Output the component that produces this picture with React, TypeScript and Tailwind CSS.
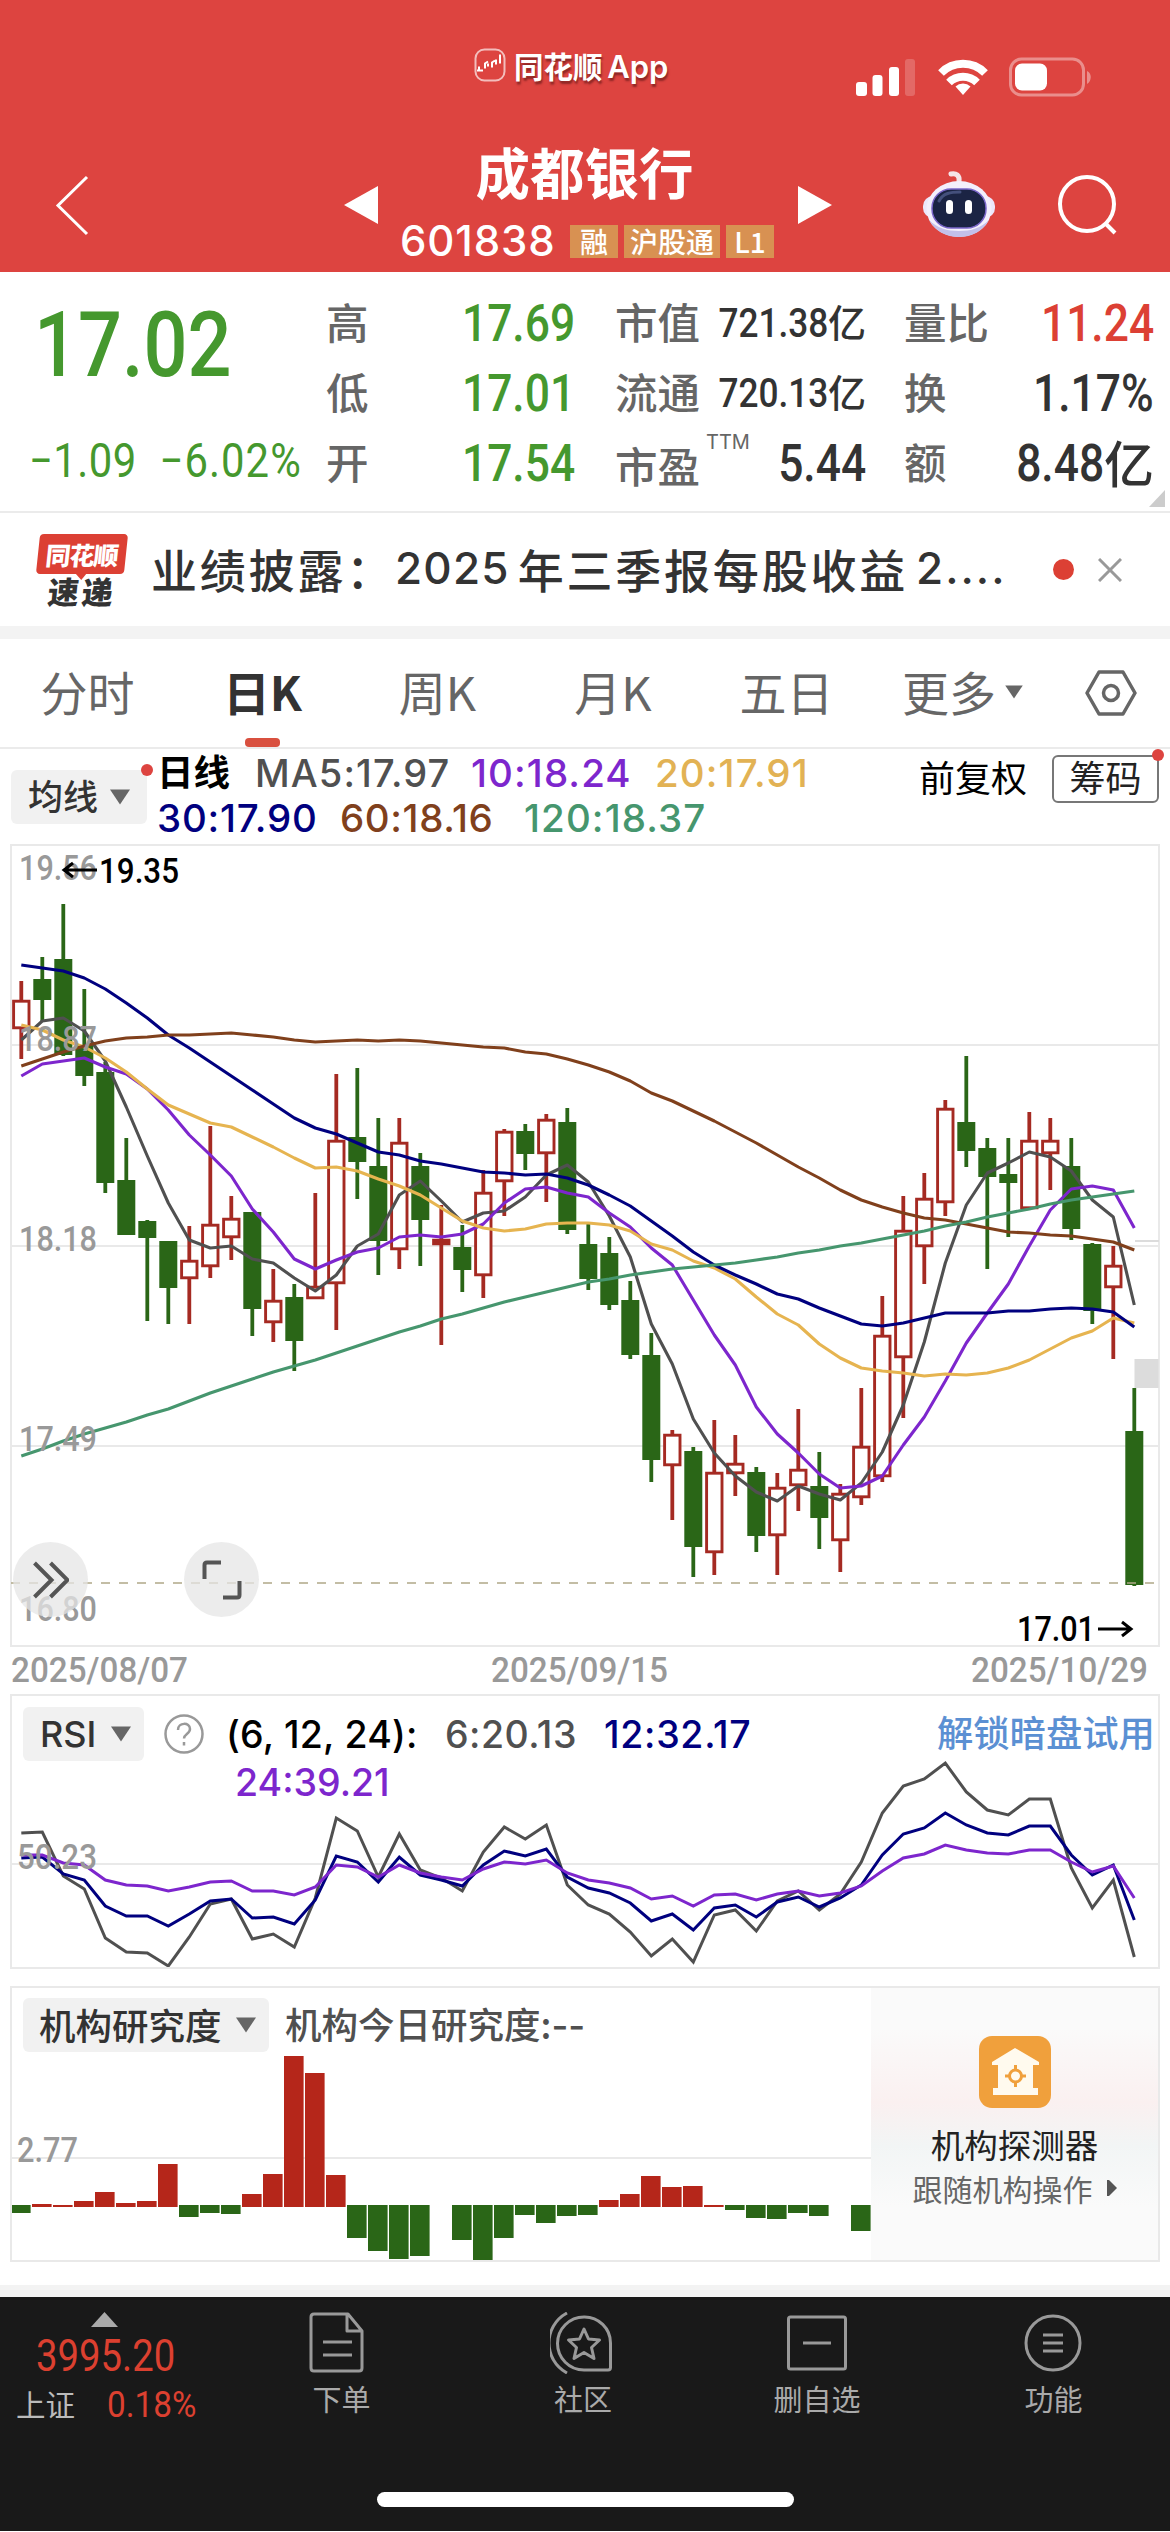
import React from "react";
import { clsx } from "clsx";

const STEP = 21;
const FIRST_X = 21.3;

type Candle = [high: number, top: number, bottom: number, low: number, up: 0 | 1];

// y values are chart pixels, measured from the top of the price panel
const candles: Candle[] = [
  [141, 160, 189, 219, 1], [117, 139, 160, 182, 0], [64, 119, 215, 216, 0],
  [149, 205, 236, 246, 0], [222, 232, 343, 353, 0], [298, 340, 395, 395, 0],
  [380, 381, 398, 481, 0], [401, 401, 448, 484, 0], [386, 420, 439, 484, 1],
  [286, 384, 427, 438, 1], [356, 378, 398, 420, 1], [372, 372, 469, 496, 0],
  [429, 460, 483, 502, 1], [444, 457, 501, 531, 0], [353, 446, 459, 459, 1],
  [234, 300, 444, 490, 1], [228, 297, 322, 359, 0], [278, 326, 401, 435, 0],
  [278, 302, 410, 429, 1], [313, 326, 380, 426, 0], [365, 399, 405, 505, 1],
  [385, 407, 430, 452, 0], [330, 352, 436, 458, 1], [289, 291, 342, 376, 1],
  [284, 291, 314, 330, 0], [274, 279, 314, 362, 1], [268, 282, 390, 394, 0],
  [384, 404, 439, 450, 0], [397, 413, 465, 470, 0], [441, 460, 515, 519, 0],
  [493, 515, 620, 642, 0], [590, 594, 626, 680, 1], [607, 611, 707, 737, 0],
  [580, 632, 713, 735, 1], [595, 623, 634, 656, 1], [627, 632, 696, 712, 0],
  [633, 647, 696, 735, 1], [569, 629, 646, 671, 1], [612, 646, 678, 709, 0],
  [644, 653, 701, 732, 1], [548, 606, 658, 665, 1], [456, 495, 637, 642, 1],
  [356, 390, 518, 578, 1], [333, 358, 407, 444, 1], [260, 268, 363, 376, 1],
  [216, 282, 311, 327, 0], [298, 308, 337, 429, 0], [298, 334, 343, 397, 0],
  [272, 300, 369, 369, 1], [278, 300, 314, 350, 1], [298, 326, 389, 400, 0],
  [403, 404, 471, 484, 0], [406, 425, 448, 519, 1], [548, 591, 745, 746, 0],
];

const averages = [
  {
    color: "#505050",
    points: [200, 181, 178, 191, 221, 267, 316, 363, 400, 408, 406, 419, 423, 438, 451, 435, 406, 394, 355, 341, 361, 382, 373, 371, 357, 335, 325, 342, 376, 417, 484, 524, 579, 613, 636, 652, 661, 646, 654, 660, 643, 612, 565, 502, 423, 365, 333, 323, 312, 317, 331, 360, 377, 465],
  },
  {
    color: "#7d26cd",
    points: [236, 224, 221, 218, 227, 234, 249, 270, 295, 315, 336, 369, 392, 419, 429, 420, 412, 408, 397, 395, 397, 394, 384, 363, 349, 347, 353, 357, 373, 387, 408, 425, 460, 495, 525, 567, 594, 613, 634, 648, 646, 636, 605, 577, 541, 503, 473, 444, 406, 370, 349, 346, 350, 388],
  },
  {
    color: "#e6b450",
    points: [185, 190, 200, 207, 218, 232, 249, 265, 274, 283, 287, 297, 307, 318, 328, 327, 331, 339, 346, 355, 368, 381, 388, 391, 389, 384, 383, 383, 385, 391, 404, 410, 421, 428, 439, 457, 474, 485, 504, 518, 528, 531, 533, 536, 534, 535, 533, 528, 520, 509, 498, 491, 478, 483],
  },
  {
    color: "#00007f",
    points: [125, 128, 131, 138, 149, 163, 178, 195, 208, 222, 236, 250, 264, 278, 288, 294, 303, 312, 315, 321, 324, 328, 332, 333, 335, 334, 338, 345, 355, 366, 381, 396, 412, 425, 435, 444, 454, 459, 468, 476, 484, 486, 483, 478, 473, 473, 473, 471, 471, 469, 468, 469, 472, 487],
  },
  {
    color: "#80401c",
    points: [226, 219, 212, 206, 201, 198, 197, 195, 195, 194, 193, 195, 197, 200, 202, 201, 200, 201, 200, 201, 203, 205, 207, 208, 212, 214, 219, 225, 232, 241, 253, 261, 271, 281, 292, 303, 315, 327, 338, 350, 360, 367, 373, 378, 380, 384, 388, 392, 393, 395, 396, 399, 402, 410],
  },
  {
    color: "#46966e",
    points: [616, 609, 601, 594, 588, 582, 575, 569, 561, 553, 546, 539, 532, 526, 520, 513, 506, 499, 492, 486, 479, 474, 468, 462, 457, 452, 447, 442, 439, 435, 432, 429, 427, 425, 423, 420, 417, 413, 410, 406, 403, 399, 395, 391, 386, 382, 377, 373, 369, 364, 360, 357, 354, 351],
  },
];

const rsi = [
  {
    color: "#505050",
    points: [153, 152, 196, 209, 258, 272, 273, 286, 257, 224, 219, 259, 254, 267, 218, 138, 151, 197, 154, 190, 198, 211, 172, 147, 159, 145, 205, 225, 234, 252, 276, 259, 282, 235, 230, 251, 221, 211, 230, 214, 182, 133, 106, 99, 83, 112, 130, 135, 119, 119, 188, 228, 200, 277],
  },
  {
    color: "#00007f",
    points: [178, 177, 194, 200, 226, 236, 236, 246, 234, 221, 219, 238, 237, 244, 220, 176, 182, 202, 177, 195, 200, 206, 185, 171, 176, 169, 197, 208, 213, 223, 241, 234, 250, 228, 225, 237, 222, 217, 227, 218, 205, 175, 154, 148, 133, 145, 153, 155, 146, 146, 175, 195, 185, 240],
  },
  {
    color: "#7d26cd",
    points: [175, 175, 183, 185, 200, 205, 206, 211, 207, 202, 201, 211, 211, 215, 207, 185, 187, 197, 185, 193, 197, 200, 189, 182, 184, 180, 193, 200, 203, 208, 219, 216, 226, 215, 214, 220, 214, 211, 216, 213, 206, 191, 178, 174, 165, 170, 173, 174, 170, 170, 182, 192, 186, 218],
  },
];

// positive grows upwards (red), negative downwards (green)
const research = [
  -8, 3, 2, 6, 15, 4, 6, 43, -12, -8, -9, 13, 33, 151, 134, 32, -33, -46, -54,
  -51, 0, -35, -55, -33, -10, -18, -11, -10, 7, 13, 31, 20, 21, 2, -5, -13, -14,
  -8, -11, 0, -26,
];

const toPoints = (ys: number[]) =>
  ys.map((y, i) => `${(FIRST_X + i * STEP).toFixed(1)},${y}`).join(" ");

interface ChartLabelProps {
  x: number;
  y: number;
  width: number;
  size?: number;
  color?: string;
  children: string;
}

const ChartLabel = ({ x, y, width, size = 35, color = "#999999", children }: ChartLabelProps) => (
  <text
    x={x}
    y={y}
    fontSize={size}
    fill={color}
    textLength={width}
    lengthAdjust="spacingAndGlyphs"
    className="font-['Roboto',sans-serif] font-medium"
  >
    {children}
  </text>
);

const Caret = ({ className }: { className?: string }) => (
  <svg viewBox="0 0 22 16" className={clsx("h-4 w-[22px]", className)}>
    <path d="M1 0.5h20L11 15.5z" fill="#666" />
  </svg>
);

const StatusBar = () => (
  <div className="flex h-[120px] items-start pl-[474px] pt-[48px] text-white">
    <svg viewBox="0 0 32 34" className="h-[34px] w-8" fill="none" stroke="#fff">
      <rect x="1.5" y="1.5" width="29" height="31" rx="9" strokeOpacity="0.65" strokeWidth="2" />
      <path d="M3 22.500h6m-4-4v3m6-1v-5l3-2m0 5v-3m4 4v-5l3-2m1 4v-5m4-5v9" strokeWidth="2" />
    </svg>
    <span className="ml-2 w-[160px] whitespace-nowrap text-[29.500px] font-semibold leading-[34px] [text-shadow:1px_3px_2px_rgba(90,20,20,0.6)]">
      同花顺 <span className="-ml-0.5 font-['Inter'] text-[31px]">App</span>
    </span>
    <svg viewBox="0 0 60 38" className="ml-[182px] mt-[11px] h-[38px] w-[60px]" fill="#fff">
      <rect x="0" y="23" width="11" height="14" rx="3" />
      <rect x="16.500" y="16" width="10" height="21" rx="3" />
      <rect x="33" y="8" width="10" height="29" rx="3" />
      <rect x="49" y="0" width="10" height="37" rx="3" opacity="0.2" />
    </svg>
    <svg viewBox="0 0 50 38" className="ml-[22px] mt-[10px] h-[38px] w-[50px]" fill="none" stroke="#fff" strokeWidth="8">
      <path d="M3 15a31 31 0 0 1 44 0" />
      <path d="M11 24.500a20 20 0 0 1 28 0" />
      <path d="M25 37l-7.500-8.500a11 11 0 0 1 15 0z" fill="#fff" stroke="none" />
    </svg>
    <svg viewBox="0 0 84 42" className="ml-[21px] mt-[9px] h-[42px] w-[84px]" fill="none">
      <rect x="1.500" y="2" width="73" height="36" rx="11" stroke="#fff" strokeOpacity="0.4" strokeWidth="3" />
      <rect x="6" y="6.500" width="32" height="27" rx="7" fill="#fff" />
      <path d="M78 14c5 2 5 10 0 13z" fill="#fff" fillOpacity="0.4" />
    </svg>
  </div>
);

const Robot = () => (
  <svg viewBox="0 0 74 72" className="h-[72px] w-[74px]">
    <path d="M37 14c1-7-3-9-8-8" fill="none" stroke="#f4e4e8" strokeWidth="5" strokeLinecap="round" />
    <rect x="1" y="28" width="72" height="22" rx="10" fill="#ece7fb" />
    <ellipse cx="37" cy="41" rx="32.500" ry="28" fill="#f3effc" />
    <path d="M7 52c6 11 17 17 30 17s24-6 30-17c-8 8-18 11-30 11S15 60 7 52z" fill="#c3c0ea" />
    <rect x="10" y="21" width="54" height="39" rx="19" fill="#1b2444" stroke="#7a66c9" strokeWidth="1.500" />
    <path d="M17 33c4-8 12-9 21-9" fill="none" stroke="#44507c" strokeWidth="3" strokeLinecap="round" />
    <rect x="24" y="32" width="7" height="14" rx="3.500" fill="#fff" />
    <rect x="43" y="32" width="7" height="14" rx="3.500" fill="#fff" />
  </svg>
);

const Tag = ({ children }: { children: string }) => (
  <span className="flex h-[33px] min-w-[48px] items-center justify-center bg-[#d89152] px-1.5 pb-0.5 text-[28px] font-medium leading-none">
    {children}
  </span>
);

const Header = () => (
  <header className="h-[272px] bg-[#dd4440] text-white">
    <StatusBar />
    <div className="flex h-[152px]">
      <svg viewBox="0 0 34 62" className="ml-[55px] mt-[55px] h-[62px] w-[34px]" fill="none">
        <path d="M32 2 3 30.500 32 59" stroke="#fff" strokeWidth="3" />
      </svg>
      <svg viewBox="0 0 34 38" className="ml-[255px] mt-[66px] h-[38px] w-[34px]">
        <path d="M0 19 34 0v38z" fill="#fff" />
      </svg>
      <div className="ml-[22px] flex w-[376px] flex-col">
        <h1 className="mt-[21px] h-[60px] text-center text-[54.500px] font-semibold leading-[60px]">
          <span className="mr-[7px]">成都银行</span>
        </h1>
        <div className="mt-6 flex h-[33px] items-center gap-1.5 whitespace-nowrap">
          <span className="mr-2.5 w-[154px] pb-0.5 font-['Inter'] text-[42px] font-medium leading-none tracking-[0.900px]">
            601838
          </span>
          <Tag>融</Tag>
          <Tag>沪股通</Tag>
          <Tag>L1</Tag>
        </div>
      </div>
      <svg viewBox="0 0 34 38" className="ml-[22px] mt-[66px] h-[38px] w-[34px]">
        <path d="M34 19 0 0v38z" fill="#fff" />
      </svg>
      <div className="ml-[90px] mt-[48px]">
        <Robot />
      </div>
      <svg viewBox="0 0 62 62" className="ml-[61px] mt-[54px] h-[62px] w-[62px]" fill="none" stroke="#fff" strokeWidth="4">
        <circle cx="30" cy="30" r="27" />
        <path d="m48 49 10 10" />
      </svg>
    </div>
  </header>
);

interface StatProps {
  label: string;
  sup?: string;
  value: string;
  unit?: string;
  tone?: "down" | "up" | "plain";
  small?: boolean;
}

const Stat = ({ label, sup, value, unit, tone = "plain", small }: StatProps) => (
  <div className="flex h-[70px] items-center justify-between whitespace-nowrap">
    <span
      className={clsx(
        "flex text-[42.500px] font-medium leading-none text-[#666]",
        sup ? "pt-1" : "pb-[3px]",
      )}
    >
      {label}
      {sup && (
        <sup className="relative -top-3 ml-1.5 font-['Inter'] text-[20px] font-normal leading-none">
          {sup}
        </sup>
      )}
    </span>
    <span
      className={clsx(
        "flex w-0 items-center justify-end leading-none",
        tone === "down" && "text-[#45982e]",
        tone === "up" && "text-[#dc4034]",
        tone === "plain" && "text-[#333]",
      )}
    >
      <span
        className={clsx(
          "origin-right scale-x-[0.87] font-['Roboto'] font-medium",
          small ? "text-[40.500px]" : "text-[51px]",
        )}
      >
        {value}
      </span>
      {unit && (
        <span className={clsx("pb-1 font-medium", small ? "text-[38px]" : "text-[50px]")}>{unit}</span>
      )}
    </span>
  </div>
);

const Quote = () => (
  <section className="relative flex h-[241px] border-b-2 border-[#ebebeb] pt-4">
    <div className="w-[326px] pl-[34px] font-['Roboto'] text-[#45982e]">
      <div className="mt-[13px] flex h-[90px] origin-left scale-x-[0.86] items-center text-[90px] font-medium leading-none">
        17.02
      </div>
      <div className="-ml-[5px] mt-[49px] flex h-[44px] w-[340px] origin-left scale-x-[0.88] items-center gap-[26px] whitespace-nowrap text-[47.500px] leading-none">
        <span className="tracking-[0.500px]">−1.09</span>
        <span className="tracking-[1.200px]">−6.02%</span>
      </div>
    </div>
    <div className="w-[249px]">
      <Stat label="高" value="17.69" tone="down" />
      <Stat label="低" value="17.01" tone="down" />
      <Stat label="开" value="17.54" tone="down" />
    </div>
    <div className="ml-[40px] w-[251px]">
      <Stat label="市值" value="721.38" unit="亿" small />
      <Stat label="流通" value="720.13" unit="亿" small />
      <Stat label="市盈" sup="TTM" value="5.44" />
    </div>
    <div className="ml-[38px] w-[250px]">
      <Stat label="量比" value="11.24" tone="up" />
      <Stat label="换" value="1.17%" />
      <Stat label="额" value="8.48" unit="亿" />
    </div>
    <svg viewBox="0 0 16 17" className="absolute bottom-1 right-[5px] h-[17px] w-4">
      <path d="M16 0v17H0z" fill="#ccc" />
    </svg>
  </section>
);

const News = () => (
  <section className="flex h-[114px] items-center border-b border-[#f3f3f3] pl-[36px]">
    <div className="flex w-[92px] flex-col items-center">
      <div className="relative flex h-10 w-[88px] -skew-x-6 items-center justify-center rounded-[4px] bg-[#dc4034] text-[25px] font-black leading-none tracking-[-1px] text-white">
        同花顺
        <svg viewBox="0 0 12 7" className="absolute -bottom-[6px] left-[39px] h-[7px] w-3">
          <path d="M0 0h12L7 7z" fill="#dc4034" />
        </svg>
      </div>
      <div className="mt-0.5 h-[30px] -skew-x-6 text-[31px] font-black leading-[30px] tracking-[3px] text-[#333]">
        速递
      </div>
    </div>
    <p className="ml-[23px] flex w-[861px] items-center whitespace-nowrap pb-1 text-[46px] font-medium leading-none tracking-[2.800px] text-[#333]">
      <span>业绩披露：</span>
      <span className="font-['Inter'] text-[44px] tracking-[1.200px]">2025</span>
      <span className="ml-2">年三季报每股收益</span>
      <span className="ml-2 font-['Inter'] text-[44px] tracking-[2px]">2....</span>
    </p>
    <div className="ml-[41px] h-[21px] w-[21px] rounded-full bg-[#dc4034]" />
    <svg viewBox="0 0 24 24" className="ml-[24px] h-6 w-6" stroke="#999" strokeWidth="3">
      <path d="m1 1 22 22M23 1 1 23" />
    </svg>
  </section>
);

const tabs = [
  { name: "分时", width: "w-[175px]" },
  { name: "日K", width: "w-[175px]" },
  { name: "周K", width: "w-[175px]" },
  { name: "月K", width: "w-[176px]" },
  { name: "五日", width: "w-[171px]" },
];

const Tabs = () => (
  <nav className="flex h-[110px] border-b-2 border-[#ebebeb] text-[47px] leading-none text-[#666]">
    {tabs.map((tab) => {
      const active = tab.name === "日K";
      return (
        <div
          key={tab.name}
          className={clsx(
            "flex flex-col items-center",
            tab.width,
            active && "font-semibold text-[#333]",
          )}
        >
          <span className="flex h-[99px] items-center pt-1">{tab.name}</span>
          {active && <span className="h-[9px] w-[35px] rounded-[4px] bg-[#d9503f]" />}
        </div>
      );
    })}
    <div className="ml-[30px] flex h-[99px] items-center pt-1">更多</div>
    <Caret className="ml-[7px] mt-[46px] h-[14px] w-[20px]" />
    <svg viewBox="0 0 52 46" className="ml-[60px] mt-[31px] h-[46px] w-[52px]" fill="none" stroke="#666" strokeWidth="3.500">
      <path d="M14 2h24l12 21-12 21H14L2 23z" strokeLinejoin="round" />
      <circle cx="26" cy="23" r="7.500" />
    </svg>
  </nav>
);

const Pill = ({ className, children }: { className?: string; children: React.ReactNode }) => (
  <div
    className={clsx(
      "flex h-[54px] items-center rounded-md bg-[#f1f1f1] text-[35px] font-medium leading-none text-[#333]",
      className,
    )}
  >
    {children}
    <Caret className="ml-auto" />
  </div>
);

const Legend = () => (
  <section className="flex h-[91px] font-['Inter','Noto_Sans_CJK_SC',sans-serif]">
    <div className="relative ml-[11px] mt-[21px] h-[54px] w-[136px]">
      <Pill className="w-full pl-[17px] pr-4">均线</Pill>
      <span className="absolute -right-[6px] -top-[6px] h-3 w-3 rounded-full bg-[#dd4440]" />
    </div>
    <div className="ml-2.5 w-[702px] whitespace-nowrap text-[38.500px] font-medium leading-[45px] tracking-[1.100px]">
      <div className="mt-[2px] flex h-[45px]">
        <span className="w-[98px] text-[36.500px] font-semibold tracking-normal text-black">日线</span>
        <span className="w-[216px] text-[38px] text-[#505050]">MA5:17.97</span>
        <span className="w-[184px] text-[#7d26cd]">10:18.24</span>
        <span className="text-[#e2b254]">20:17.91</span>
      </div>
      <div className="flex h-[45px]">
        <span className="w-[183px] tracking-[0.800px] text-[#00007f]">30:17.90</span>
        <span className="w-[184px] tracking-[0.600px] text-[#80401c]">60:18.16</span>
        <span className="text-[#46966e]">120:18.37</span>
      </div>
    </div>
    <span className="ml-[60px] mt-[8px] h-11 w-[133px] text-[36px] leading-[44px] text-black">前复权</span>
    <div className="relative mt-[6px] flex h-[48px] w-[107px] items-center justify-center rounded-[6px] border-2 border-[#777] text-[36px] leading-none text-[#222]">
      筹码
      <span className="absolute -right-[7px] -top-[8px] h-3 w-3 rounded-full bg-[#dd4440]" />
    </div>
  </section>
);

const Candles = () => (
  <>
    {candles.map(([high, top, bottom, low, up], i) => {
      const x = FIRST_X + i * STEP;
      const color = up ? "#a52a22" : "#2a6617";
      return (
        <g key={i} stroke={color} strokeWidth="3.800">
          {up ? (
            <>
              <path d={`M${x} ${high}V${top}M${x} ${bottom}V${low}`} />
              <rect
                x={x - 7.7}
                y={top + 1.2}
                width="15.400"
                height={Math.max(bottom - top - 2.4, 1)}
                strokeWidth="2.900"
                fill={bottom - top < 8 ? color : "#fff"}
              />
            </>
          ) : (
            <>
              <path d={`M${x} ${high}V${low}`} />
              <rect x={x - 9} y={top} width="18" height={bottom - top} fill={color} stroke="none" />
            </>
          )}
        </g>
      );
    })}
  </>
);

const PriceChart = () => (
  <section className="relative h-[808px]">
    <svg viewBox="0 0 1170 808" className="block h-[808px] w-full overflow-visible" fill="none">
      <g stroke="#e9e9e9" strokeWidth="2">
        <rect x="11" y="5" width="1148" height="801" />
        <path d="M11 205h1148M11 406h1148M11 606h1148" />
      </g>
      <ChartLabel x={19} y={40} width={78}>19.56</ChartLabel>
      <path d="M1135 401h24" stroke="#dcdcdc" strokeWidth="2" />
      <rect x="1134.500" y="519" width="24" height="29" fill="#dcdcdc" />
      <Candles />
      {averages.map(({ color, points }) => (
        <polyline key={color} points={toPoints(points)} stroke={color} strokeWidth="3.100" strokeLinejoin="round" />
      ))}
      <path d="M10 743H1159" stroke="#b0a888" strokeWidth="1.600" strokeDasharray="9 9" strokeDashoffset="-1" />
      <ChartLabel x={19} y={211} width={78}>18.87</ChartLabel>
      <ChartLabel x={19} y={411} width={78}>18.18</ChartLabel>
      <ChartLabel x={19} y={611} width={78}>17.49</ChartLabel>
      <ChartLabel x={19} y={781} width={78}>16.80</ChartLabel>
      <path d="M97 30H64m9-7-9 7 9 7" stroke="#000" strokeWidth="3" />
      <ChartLabel x={99} y={43} width={80} color="#000">19.35</ChartLabel>
      <ChartLabel x={1017} y={801} width={78} color="#000">17.01</ChartLabel>
      <path d="M1098 789h33m-9-7 9 7-9 7" stroke="#000" strokeWidth="3" />
    </svg>
    {/* Floating chart controls */}
    <div className="absolute left-[13px] top-[702px] flex h-[75px] w-[75px] items-center justify-center rounded-full bg-[#e6e6e6]/75">
      <svg viewBox="0 0 36 38" className="h-[38px] w-9" fill="none" stroke="#555" strokeWidth="4">
        <path d="m1.500 2 17 17-17 17M17.500 2l17 17-17 17" />
      </svg>
    </div>
    <div className="absolute left-[184px] top-[702px] flex h-[75px] w-[75px] items-center justify-center rounded-full bg-[#e6e6e6]/75">
      <svg viewBox="0 0 40 40" className="h-10 w-10" fill="none" stroke="#555" strokeWidth="4">
        <path d="M2.500 19V5q0-2.500 2.500-2.500h14M37.500 21v14q0 2.500-2.500 2.500H21" />
      </svg>
    </div>
  </section>
);

const Dates = () => (
  <svg viewBox="0 0 1170 46" className="block h-[46px] w-full">
    <ChartLabel x={11} y={34} width={177}>2025/08/07</ChartLabel>
    <ChartLabel x={491} y={34} width={177}>2025/09/15</ChartLabel>
    <ChartLabel x={971} y={34} width={177}>2025/10/29</ChartLabel>
  </svg>
);

const RsiPanel = () => (
  <section className="relative mx-[10px] h-[275px] border-2 border-[#e9e9e9] font-['Inter','Noto_Sans_CJK_SC',sans-serif]">
    <svg viewBox="12 16 1146 271" className="absolute inset-0 h-full w-full" fill="none">
      <path d="M11 184h1148" stroke="#e9e9e9" strokeWidth="2" />
      {rsi.map(({ color, points }) => (
        <polyline key={color} points={toPoints(points)} stroke={color} strokeWidth="3" />
      ))}
      <ChartLabel x={17} y={189} width={80}>50.23</ChartLabel>
    </svg>
    <div className="relative flex items-center pl-[11px] pt-[11px] text-[37.500px] font-medium leading-[49px]">
      <Pill className="w-[121px] pl-[17px] pr-3">
        <span className="text-[36px]">RSI</span>
      </Pill>
      <svg viewBox="0 0 40 40" className="ml-5 h-10 w-10" fill="none" stroke="#999" strokeWidth="2.500">
        <circle cx="20" cy="20" r="18.500" />
        <path d="M14 16c0-8 12-8 12-1 0 5-6 5-6 9.500M20 28v3.500" />
      </svg>
      <span className="ml-[22px] w-[219px] tracking-[0.200px] text-black">(6, 12, 24):</span>
      <span className="w-[159px] tracking-[0.500px] text-[#505050]">6:20.13</span>
      <span className="w-[333px] tracking-[0.700px] text-[#00007f]">12:32.17</span>
      <span className="whitespace-nowrap text-[36.300px] text-[#5b90d3]">解锁暗盘试用</span>
    </div>
    <div className="relative -mt-[3px] pl-[223px] text-[37.500px] font-medium leading-[49px] text-[#7d26cd]">
      24:39.21
    </div>
  </section>
);

const ResearchPanel = () => (
  <section className="mx-[10px] mt-[17px] flex h-[276px] border-2 border-[#e9e9e9]">
    <div className="relative w-[859px]">
      <svg viewBox="12 17 859 272" className="absolute inset-0 h-full w-full">
        <path d="M11 187h860" stroke="#e9e9e9" strokeWidth="2" />
        {research.map((value, i) => (
          <rect
            key={i}
            x={11 + i * 21}
            y={value > 0 ? 236 - value : 234}
            width="19.600"
            height={Math.abs(value)}
            fill={value > 0 ? "#b5261a" : "#2a6617"}
          />
        ))}
        <ChartLabel x={17} y={191} width={61}>2.77</ChartLabel>
      </svg>
      <div className="relative flex items-center pl-[11px] pt-[10px] text-[36px] font-medium leading-none text-[#505050]">
        <Pill className="w-[246px] pl-4 pr-3">
          <span className="text-[36.500px]">机构研究度</span>
        </Pill>
        <span className="ml-4 whitespace-nowrap text-[36.500px]">
          机构今日研究度:<span className="font-['Inter']">--</span>
        </span>
      </div>
    </div>
    <div className="flex flex-1 flex-col items-center bg-[linear-gradient(180deg,#fafafa_15%,#faf0f0_42%,#f2f5f5_58%,#fafafa_80%)]">
      <svg viewBox="0 0 72 72" className="mt-[48px] h-[72px] w-[72px]">
        <rect width="72" height="72" rx="13" fill="#f0a03c" />
        <path d="M36 12 60 26v3h-6v23h5v7H14v-7h5V29h-6v-3z" fill="#fffaee" />
        <circle cx="36.500" cy="40" r="6" fill="none" stroke="#f0a03c" strokeWidth="3" />
        <path d="M36.500 29v5m0 12v5M26 40h5m11 0h5" stroke="#f0a03c" strokeWidth="3" />
      </svg>
      <span className="mt-[18px] text-[33.500px] leading-[36px] text-[#222]">机构探测器</span>
      <span className="mt-[9px] flex items-center whitespace-nowrap text-[30px] leading-[34px] text-[#666]">
        跟随机构操作
        <svg viewBox="0 0 10 16" className="ml-3.5 h-4 w-2.5">
          <path d="M0 0h2l8 8-8 8H0z" fill="#555" />
        </svg>
      </span>
    </div>
  </section>
);

const iconProps = {
  viewBox: "0 0 66 62",
  className: "h-[62px] w-[66px]",
  fill: "none",
  stroke: "#999",
  strokeWidth: 3,
};

const actions = [
  {
    name: "下单",
    width: "w-[223px]",
    icon: (
      <svg {...iconProps}>
        <path d="M5 2h34l14 17v37q0 3-3 3H5q-3 0-3-3V5q0-3 3-3zM38 2v17h15M14 30h29M14 43h29" strokeLinejoin="round" />
      </svg>
    ),
  },
  {
    name: "社区",
    width: "w-[260px]",
    icon: (
      <svg {...iconProps}>
        <path d="M17 1C-7 14-7 48 17 61" />
        <path d="M34 5a26 26 0 1 0 0 53h24q2.500 0 2.500-2.500V31A26 26 0 0 0 34 5z" />
        <path d="m34 17 4.500 10 11 1-8 7.500 2.500 11-10-6-10 6 2.500-11-8-7.500 11-1z" strokeLinejoin="round" />
      </svg>
    ),
  },
  {
    name: "删自选",
    width: "w-[208px]",
    icon: (
      <svg {...iconProps}>
        <rect x="4.500" y="5" width="57" height="52" rx="2" />
        <path d="M19 31h28" />
      </svg>
    ),
  },
  {
    name: "功能",
    width: "w-[249px] pl-4",
    icon: (
      <svg {...iconProps}>
        <circle cx="32" cy="31" r="27" />
        <path d="M22 23h20M22 31h20M22 39h20" />
      </svg>
    ),
  },
];

const BottomBar = () => (
  <footer className="h-[234px] bg-[#191919]">
    <div className="flex h-[195px]">
      <div className="w-[230px] shrink-0 font-['Roboto'] text-[#dc4030]">
        <svg viewBox="0 0 27 15" className="ml-[91px] mt-[15px] h-[15px] w-[27px]">
          <path d="M13.500 0 27 15H0z" fill="#aaa" />
        </svg>
        <div className="ml-[36px] mt-[9px] h-[42px] w-[170px] origin-left scale-x-[0.88] text-[43.500px] leading-[42px]">
          3995.20
        </div>
        <div className="mt-[5px] flex h-[42px] items-center leading-none">
          <span className="ml-4 w-[91px] font-['Noto_Sans_CJK_SC'] text-[29.500px] text-[#bbb]">上证</span>
          <span className="origin-left scale-x-[0.9] text-[37px]">0.18%</span>
        </div>
      </div>
      {actions.map((action) => (
        <div
          key={action.name}
          className={clsx("flex shrink-0 flex-col items-center text-[#aaa]", action.width)}
        >
          <div className="mt-[15px]">{action.icon}</div>
          <span className="mt-2 text-[29px] leading-[32px]">{action.name}</span>
        </div>
      ))}
    </div>
    <div className="mx-auto h-[15px] w-[417px] rounded-full bg-white" />
  </footer>
);

export default function App() {
  return (
    <div className="h-[2532px] w-[1170px] overflow-hidden bg-white font-['Noto_Sans_CJK_SC',sans-serif]">
      <Header />
      <Quote />
      <News />
      <div className="h-3 bg-[#f3f3f3]" />
      <Tabs />
      <Legend />
      <PriceChart />
      <Dates />
      <RsiPanel />
      <ResearchPanel />
      <div className="mt-[23px] h-3 bg-[#f3f3f3]" />
      <BottomBar />
    </div>
  );
}
